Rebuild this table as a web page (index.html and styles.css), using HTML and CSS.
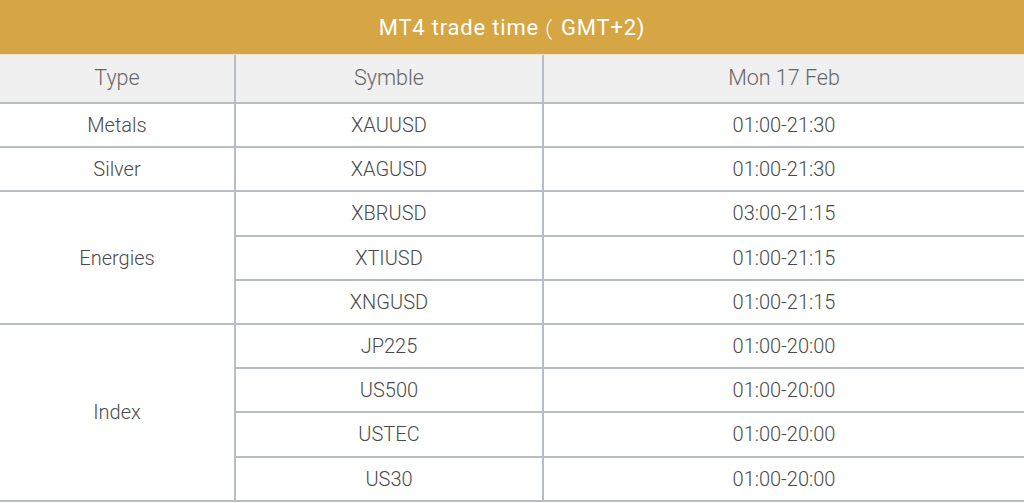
FILE: index.html
```html
<!DOCTYPE html>
<html lang="en">
<head>
<meta charset="utf-8">
<title>MT4 trade time</title>
<link rel="stylesheet" href="styles.css">
</head>
<body>
<div class="sheet">
  <div class="title">MT4 trade time<span class="paren">（</span>GMT+2)</div>
  <div class="grid">
    <div class="cell head">Type</div>
    <div class="cell head">Symble</div>
    <div class="cell head">Mon 17 Feb</div>

    <div class="cell type">Metals</div>
    <div class="cell">XAUUSD</div>
    <div class="cell">01:00-21:30</div>

    <div class="cell type">Silver</div>
    <div class="cell">XAGUSD</div>
    <div class="cell">01:00-21:30</div>

    <div class="cell type span3">Energies</div>
    <div class="cell">XBRUSD</div>
    <div class="cell">03:00-21:15</div>
    <div class="cell">XTIUSD</div>
    <div class="cell">01:00-21:15</div>
    <div class="cell">XNGUSD</div>
    <div class="cell">01:00-21:15</div>

    <div class="cell type span4">Index</div>
    <div class="cell">JP225</div>
    <div class="cell">01:00-20:00</div>
    <div class="cell">US500</div>
    <div class="cell">01:00-20:00</div>
    <div class="cell">USTEC</div>
    <div class="cell">01:00-20:00</div>
    <div class="cell">US30</div>
    <div class="cell">01:00-20:00</div>
  </div>
</div>
</body>
</html>
```
FILE: styles.css
```css
html, body {
  margin: 0;
  padding: 0;
  background: #ffffff;
}

.sheet {
  width: 1024px;
  font-family: Roboto, "Liberation Sans", "Noto Sans CJK SC", sans-serif;
}

.title {
  height: 54px;
  background: #d6a544;
  color: #ffffff;
  font-size: 22px;
  letter-spacing: 0.8px;
  display: flex;
  align-items: center;
  justify-content: center;
  border-bottom: 1px solid #f2e2bf;
}

.paren {
  font-family: "Noto Sans CJK SC", sans-serif;
  font-weight: 300;
  font-feature-settings: "halt";
  letter-spacing: 0;
  margin-left: 3px;
  margin-right: 8px;
}

.grid {
  display: grid;
  grid-template-columns: 234px 306px 1fr;
  grid-template-rows: 47px;
  grid-auto-rows: 42.2px;
  gap: 2px;
  background: #b8bcc5;
  padding-bottom: 2px;
}

.cell {
  background: #ffffff;
  display: flex;
  align-items: center;
  justify-content: center;
  font-size: 20px;
  font-weight: 300;
  color: #4a4a4a;
}

.cell.head {
  background: #f0f0f0;
  color: #666666;
  font-size: 21.5px;
  padding-bottom: 3px;
  box-sizing: border-box;
}

.span3 {
  grid-row: span 3;
}

.span4 {
  grid-row: span 4;
}
```
